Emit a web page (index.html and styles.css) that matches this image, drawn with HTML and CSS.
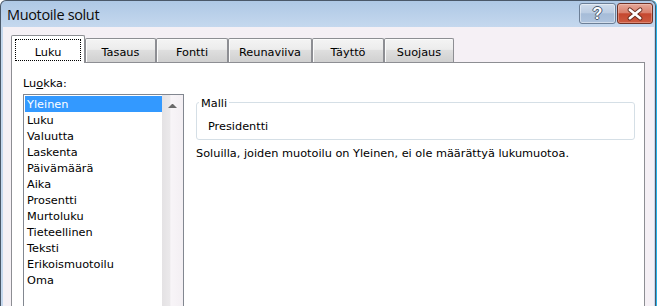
FILE: index.html
```html
<!DOCTYPE html>
<html lang="fi">
<head>
<meta charset="utf-8">
<title>Muotoile solut</title>
<link rel="stylesheet" href="styles.css">
</head>
<body>
<div class="window">
  <div class="titlebar">
    <span class="title">Muotoile solut</span>
    <div class="caption-buttons">
      <div class="cbtn help">?</div>
      <div class="cbtn close">
        <svg width="36" height="21" viewBox="0 0 36 21">
          <path d="M12.5 6.5 L23.5 15.5 M23.5 6.5 L12.5 15.5" stroke="#5a2418" stroke-width="4.8" stroke-linecap="round" fill="none" opacity="0.85"/>
          <path d="M12.5 6.5 L23.5 15.5 M23.5 6.5 L12.5 15.5" stroke="#ffffff" stroke-width="2.8" stroke-linecap="round" fill="none"/>
        </svg>
      </div>
    </div>
  </div>
  <div class="client">
    <div class="tabs">
      <div class="tab active w-luku"><span class="focus">Luku</span></div>
      <div class="tab w-tasaus">Tasaus</div>
      <div class="tab w-fontti">Fontti</div>
      <div class="tab w-reuna">Reunaviiva</div>
      <div class="tab w-taytto">Täyttö</div>
      <div class="tab w-suojaus">Suojaus</div>
    </div>
    <div class="panel">
      <div class="category">
        <div class="label">Lu<u>o</u>kka:</div>
        <div class="listbox">
          <ul class="items">
            <li class="selected">Yleinen</li>
            <li>Luku</li>
            <li>Valuutta</li>
            <li>Laskenta</li>
            <li>Päivämäärä</li>
            <li>Aika</li>
            <li>Prosentti</li>
            <li>Murtoluku</li>
            <li>Tieteellinen</li>
            <li>Teksti</li>
            <li>Erikoismuotoilu</li>
            <li>Oma</li>
          </ul>
          <div class="scrollbar">
            <svg class="arrow-up" width="21" height="12" viewBox="0 0 21 12">
              <path d="M6 9 L10 5 L11 5 L15 9 Z" fill="#6b6b6b"/>
            </svg>
          </div>
        </div>
      </div>
      <div class="details">
        <fieldset class="sample">
          <legend>Malli</legend>
          <div class="sample-value">Presidentti</div>
        </fieldset>
        <p class="desc">Soluilla, joiden muotoilu on Yleinen, ei ole määrättyä lukumuotoa.</p>
      </div>
    </div>
  </div>
</div>
</body>
</html>
```
FILE: styles.css
```css
html, body {
  margin: 0;
  height: 306px;
  overflow: hidden;
  background: #ffffff;
}
body {
  font-family: "DejaVu Sans", Verdana, sans-serif;
  font-size: 11.3px;
  color: #000;
}
.window {
  width: 656px;
  height: 306px;
  overflow: hidden;
  box-sizing: border-box;
  border: 1px solid #4a5869;
  border-bottom: none;
  border-radius: 6px 6px 0 0;
  background: linear-gradient(#aec8e5 0, #c5d8ee 26px, #c5d8ee 100%);
  padding: 0 1px 0 2px;
  display: flex;
  flex-direction: column;
  box-shadow: 1px 0 0 #27b2ea;
}
.titlebar {
  height: 26px;
  flex: none;
  display: flex;
  align-items: flex-start;
  padding: 0 1px 0 4px;
}
.title {
  font-family: "Open Sans", "Noto Sans", sans-serif;
  font-size: 14.5px;
  letter-spacing: -0.35px;
  line-height: 20px;
  margin-top: 4px;
  color: #0c0c0c;
}
.caption-buttons {
  margin-left: auto;
  margin-top: 2px;
  display: flex;
  gap: 1px;
}
.cbtn {
  box-sizing: border-box;
  height: 21px;
  border-radius: 3px;
  display: flex;
  align-items: center;
  justify-content: center;
}
.help {
  width: 37px;
  border: 1px solid #6c7f97;
  background: linear-gradient(#cfdcec 0, #bccde3 45%, #a6bcd8 52%, #afc4de 100%);
  box-shadow: inset 0 0 0 1px rgba(255,255,255,0.45);
  color: #fff;
  font-family: "Liberation Sans", Arial, sans-serif;
  font-weight: bold;
  font-size: 16px;
  line-height: 19px;
  text-shadow: 1px 0 0 #4b5a6e, -1px 0 0 #4b5a6e, 0 1px 0 #4b5a6e, 0 -1px 0 #4b5a6e;
}
.close {
  width: 36px;
  border: 1px solid #6e3126;
  background: linear-gradient(#e5a899 0, #d9806d 45%, #c5472f 52%, #cc5b41 100%);
  box-shadow: inset 0 0 0 1px rgba(255,220,210,0.35);
}
.close svg {
  display: block;
}
.client {
  flex: 1;
  min-height: 0;
  background: #f5f0f5;
  padding: 8px 9px 0 8px;
  display: flex;
  flex-direction: column;
}
.tabs {
  height: 27px;
  flex: none;
  display: flex;
  align-items: flex-end;
}
.tab {
  box-sizing: border-box;
  height: 24px;
  border: 1px solid #8d8e93;
  border-bottom: none;
  border-radius: 2px 2px 0 0;
  background: linear-gradient(#f4f4f4 0, #ececec 45%, #dedede 50%, #d0d0d0 100%);
  box-shadow: inset 1px 1px 0 #fbfbfb;
  display: flex;
  align-items: center;
  justify-content: center;
  padding-top: 3px;
  line-height: 13px;
}
.tab.active {
  height: 28px;
  margin-bottom: -1px;
  background: #ffffff;
  box-shadow: none;
  padding: 3px 3px 2px 3px;
  position: relative;
  z-index: 1;
  align-items: stretch;
}
.focus {
  flex: 1;
  border: 1px dotted #000;
  display: flex;
  align-items: center;
  justify-content: center;
  padding-top: 4px;
  box-sizing: border-box;
}
.w-luku { width: 74px; }
.w-tasaus { width: 71px; }
.w-fontti { width: 72px; }
.w-reuna { width: 84px; }
.w-taytto { width: 72px; }
.w-suojaus { width: 70px; }
.panel {
  flex: none;
  height: 260px;
  box-sizing: border-box;
  display: flex;
  align-items: flex-start;
  border: 1px solid #8d8e93;
  background: #ffffff;
  padding: 14px 0 0 11px;
}
.category {
  width: 161px;
  flex: none;
}
.label {
  line-height: 13px;
}
.listbox {
  margin-top: 4px;
  display: flex;
  width: 161px;
  height: 240px;
  box-sizing: border-box;
  border: 1px solid #828790;
}
.items {
  list-style: none;
  margin: 0;
  padding: 1px 0 0 1px;
  width: 138px;
  box-sizing: border-box;
}
.items li {
  line-height: 16px;
  height: 16px;
  box-sizing: border-box;
  padding: 1px 0 0 2px;
}
.items li.selected {
  background: #3399ff;
  color: #ffffff;
}
.scrollbar {
  width: 21px;
  background: linear-gradient(to right, #e4e2e4 0, #ebe9eb 38%, #f8f5f8 42%, #f3eff3 100%);
}
.arrow-up {
  display: block;
  margin-top: 4px;
}
.details {
  flex: 1;
  margin: 0 9px 0 12px;
}
.sample {
  margin: 18px 0 0 0;
  padding: 0 0 6px 2px;
  border: 1px solid #d5dfe6;
  border-radius: 3px;
  min-width: 0;
}
.sample legend {
  padding: 2px 2px 0 2px;
  line-height: 13px;
}
.sample-value {
  padding-left: 9px;
  margin-top: 10px;
  line-height: 13px;
}
.desc {
  margin: 7px 0 0 0;
  line-height: 13px;
}
```
